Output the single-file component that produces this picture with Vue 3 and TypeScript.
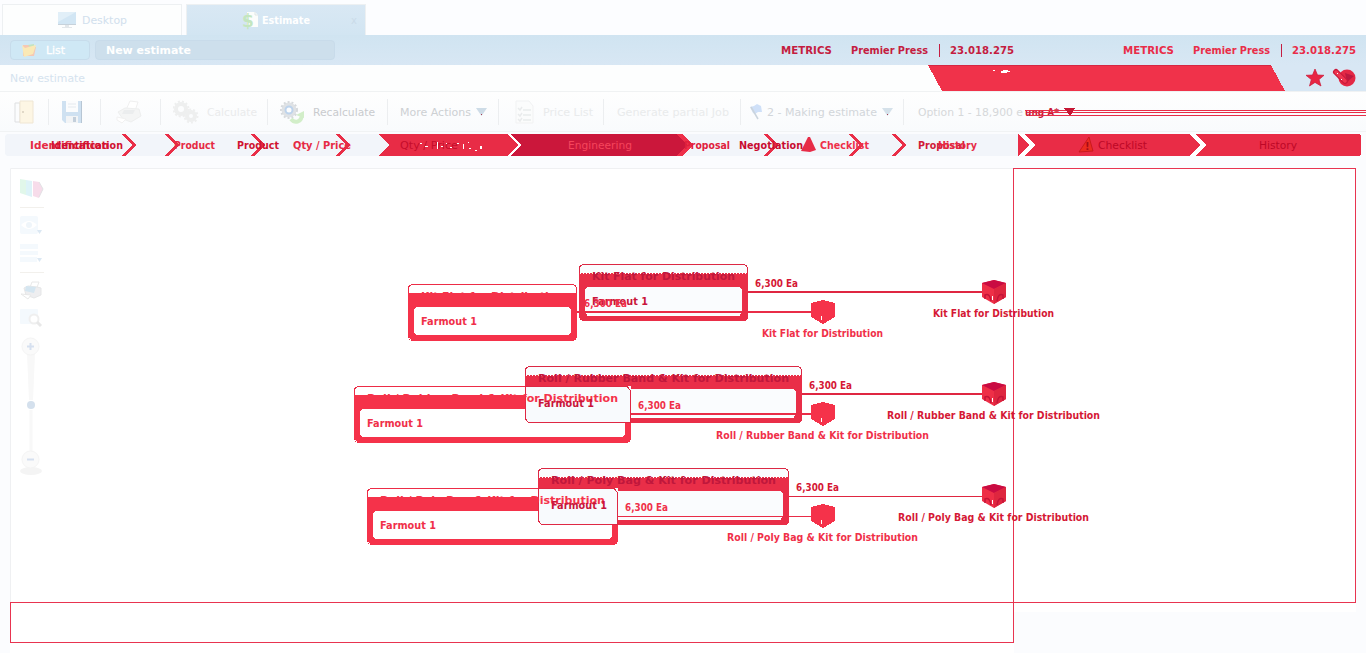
<script setup lang="ts">
import { h } from 'vue'

interface FitProps { t: string; w: number; c?: string; b?: boolean; s?: number }

// Single text line spread over a fixed width
const Fit = (p: FitProps) =>
  h('svg', { width: p.w, height: 16, style: 'display:block;overflow:visible;flex:none' }, [
    h('text', {
      x: 0, y: 12, fill: p.c ?? '#d9dcdf', 'font-size': 11,
      'font-weight': p.b ? 700 : 400, stroke: p.c, 'stroke-width': p.s ?? 0,
      textLength: p.w, lengthAdjust: 'spacingAndGlyphs',
    }, p.t),
  ])
Fit.props = { t: String, w: Number, c: String, b: Boolean, s: Number }

const brands = [{ c: '#c41c40' }, { c: '#e92c48' }]

const thin = [122, 165, 251, 336, 764, 849, 892]
const chevron = (x: number) => `M${x} 134h4l10 11l-10 11h-4l10-11z`

interface Label { t: string; x: number; w: number; c: string; thin?: boolean }
const stages: Label[] = [
  { t: 'Identification', x: 30, w: 79, c: '#e62a44' },
  { t: 'Identification', x: 51, w: 72, c: '#d01230' },
  { t: 'Product', x: 174, w: 41, c: '#e62a44' },
  { t: 'Product', x: 237, w: 42, c: '#d01230' },
  { t: 'Qty / Price', x: 293, w: 58, c: '#e62a44' },
  { t: 'Qty / Price', x: 400, w: 58, c: '#c50d2b', thin: true },
  { t: 'Engineering', x: 568, w: 64, c: '#f5455c', thin: true },
  { t: 'Proposal', x: 684, w: 46, c: '#e0203c' },
  { t: 'Negotiation', x: 739, w: 64, c: '#c80c30' },
  { t: 'Checklist', x: 820, w: 49, c: '#ee304a' },
  { t: 'Proposal', x: 918, w: 47, c: '#d01a38' },
  { t: 'History', x: 938, w: 39, c: '#e62a44' },
  { t: 'Checklist', x: 1098, w: 49, c: '#bd0826', thin: true },
  { t: 'History', x: 1259, w: 38, c: '#bd0826', thin: true },
]

interface Row {
  t: string; y: number; w: number; dark: number; light: number; titleW: number
  labelW: number; lx: number; dx: number; th: number
}
const rows: Row[] = [
  { t: 'Kit Flat for Distribution', y: 264, w: 169, dark: 579, light: 408, titleW: 143, labelW: 121, lx: 762, dx: 933, th: 2 },
  { t: 'Roll / Rubber Band & Kit for Distribution', y: 366, w: 277, dark: 525, light: 354, titleW: 251, labelW: 213, lx: 716, dx: 887, th: 2 },
  { t: 'Roll / Poly Bag & Kit for Distribution', y: 468, w: 251, dark: 538, light: 367, titleW: 225, labelW: 191, lx: 727, dx: 898, th: 1 },
]
</script>

<template>
  <div class="app">
    <nav class="tabs">
      <div class="tab">
        <svg width="20" height="18"><path d="M1 1h18v13H1z" fill="#d2e6f4" /><path d="M1 1h18L1 11z" fill="#e1eff8" /><path d="M1 13h18v1H1z" fill="#c7d2db" /><path d="M8 14h4v2h3v1H5v-1h3z" fill="#e3e7ea" /></svg>
        <Fit t="Desktop" :w="45" c="#d1e0ed" />
      </div>
      <div class="tab active">
        <svg width="17" height="19"><path d="M5 1h8l3 3v12H5z" fill="#fcfdfb" /><path d="M13 1v3h3" fill="none" stroke="#dfe6e6" /><text x="0" y="16" font-size="17" font-weight="700" fill="#c3e6bf">$</text></svg>
        <Fit t="Estimate" :w="48" c="#ffffff" b />
        <span class="close">x</span>
      </div>
    </nav>

    <header class="bar">
      <button class="list">
        <svg width="16" height="15"><path d="M2 2h6l1 2h6l-2 9H2z" fill="#f5c8b4" /><path d="M7 2l6-1v8z" fill="#c3e4c0" /><path d="M1 2l3 3 11-3-3 9-9 3z" fill="#fae9b6" /></svg>
        <Fit t="List" :w="19" c="#ffffff" :s="0.3" />
      </button>
      <div class="field"><Fit t="New estimate" :w="85" c="#ffffff" b /></div>
      <div class="brands">
        <div v-for="b in brands" :key="b.c" class="brand">
          <Fit t="METRICS" :w="51" :c="b.c" b />
          <Fit t="Premier Press" :w="77" :c="b.c" b class="press" />
          <i class="rule"></i>
          <Fit t="23.018.275" :w="64" :c="b.c" b />
        </div>
      </div>
    </header>

    <div class="crumb">
      <Fit t="New estimate" :w="75" c="#d5e3ef" />
      <svg class="banner" width="438" height="27">
        <path d="M342 0h96v26h-96z" fill="#d8e7f4" />
        <g shape-rendering="crispEdges">
          <path d="M0 0h343l14 26H14z" fill="#f0324a" />
          <path d="M0 0h343v1H1z" fill="#d52742" />
          <path d="M65 5h2v1h-2zM73 6h2v-1h5v1h2v1h-3v1h-6z" fill="#fff" />
        </g>
        <path d="M387 4l2.5 6 6.5.3-5 4.3 2 6.4-6-3.6-5.500 3.600 1.800-6.400-5.300-4.300 6.500-.3z" fill="#e82643" stroke="#ca1a3a" stroke-width=".7" />
        <circle cx="419" cy="13" r="8.500" fill="#e32845" /><path d="M417 8l9 3-7 6z" fill="#bc193f" />
        <path d="M408 7l9 9" stroke="#ca1a3b" stroke-width="6" stroke-linecap="round" /><path d="M408 7l9 9" stroke="#ee3650" stroke-width="3.500" stroke-linecap="round" />
        <path d="M409 8h1v1h-1zM413 14h1v1h-1z" fill="#fff" />
      </svg>
    </div>

    <div class="tools">
      <div class="cell c1"><svg width="20" height="24"><path d="M1 3h5v19H1z" fill="#fbfcfd" stroke="#dedfe1" /><path d="M6 1h13v22H6z" fill="#fdf6e4" stroke="#efe6d4" /><path d="M8 12h2" stroke="#c5bbaa" /></svg></div>
      <div class="cell c2"><svg width="22" height="24"><path d="M1 1h20v22H4l-3-3z" fill="#cfe1f1" /><path d="M5 1h12v11H5z" fill="#fbfcfd" /><path d="M7 4h8M7 7h8" stroke="#e4e9ee" /><path d="M5 16h12v7H5z" fill="#f2f4f6" /><path d="M12 17h3v5h-3z" fill="#c3cfdb" /><path d="M20.500 1v22" stroke="#b7c6d4" /></svg></div>
      <div class="cell c3"><svg width="26" height="24"><path d="M10 10l4-9 8 1-3 9z" fill="#fff" stroke="#f0f0f0" /><path d="M2 12l7-4 14 1 2 7-10 6-8-3z" fill="#f4f5f5" stroke="#eeefef" /><path d="M1 17l9 2-4 4-5-3z" fill="#fff" stroke="#f1f1f1" /><path d="M8 10h11l-2 4H6z" fill="#ebedee" /></svg></div>
      <div class="cell c4">
        <svg width="26" height="24"><g fill="none" stroke="#eeefef"><circle cx="8" cy="9" r="5" stroke-width="4" /><circle cx="8" cy="9" r="7.500" stroke-width="2" stroke-dasharray="2 2" /><circle cx="18" cy="16" r="4" stroke-width="4" /><circle cx="18" cy="16" r="6.500" stroke-width="2" stroke-dasharray="2 2" /></g></svg>
        <Fit t="Calculate" :w="50" c="#eaebec" />
      </div>
      <div class="cell c5">
        <svg width="26" height="24"><g fill="none"><circle cx="9" cy="10" r="5.500" stroke="#dfe2e5" stroke-width="4" /><circle cx="9" cy="10" r="8" stroke="#d6d9dc" stroke-width="2" stroke-dasharray="2 2" /><circle cx="9" cy="10" r="3.500" stroke="#bdd3ec" stroke-width="2" /><path d="M11 19c4 5 11 3 11-5" stroke="#d2eec9" stroke-width="4" /></g><path d="M16 15l8-4v7z" fill="#d2eec9" /></svg>
        <Fit t="Recalculate" :w="62" c="#c9cbce" />
      </div>
      <div class="cell c6"><Fit t="More Actions" :w="71" c="#cdd0d3" /><svg width="11" height="9"><path d="M0 1h11L5.500 9z" fill="#cedce7" /><path d="M5 7h1v1H5z" fill="#a83b4f" /></svg></div>
      <div class="cell c7">
        <svg width="20" height="24"><path d="M1 1h13l4 5v17H1z" fill="#fbfcfc" stroke="#f1f2f3" /><path d="M3 8l2 2 2-3M3 14l2 2 2-3M3 19l2 2 2-3M8 10h8M8 15h8M8 20h8" fill="none" stroke="#e9ebec" stroke-width="1.500" /></svg>
        <Fit t="Price List" :w="50" c="#e9ebec" />
      </div>
      <div class="cell c8"><Fit t="Generate partial Job" :w="112" c="#e9ebec" /></div>
      <div class="cell c9"><svg width="12" height="16"><path d="M0 3l4-1 3-2 4 2 1 6-4 0-3 2-2-1z" fill="#cfe0f8" /><path d="M1 3l7 12" stroke="#cbd4dd" stroke-width="1.500" /></svg><Fit t="2 - Making estimate" :w="110" c="#d2d6da" /><svg width="11" height="9"><path d="M0 1h11L5.500 9z" fill="#d5e1ea" /><path d="M5 7h1v1H5z" fill="#a83b4f" /></svg></div>
      <div class="cell c10"><Fit t="Option 1 - 18,900 e" :w="105" c="#d6d8da" /></div>
      <svg class="strikes" width="341" height="20" shape-rendering="crispEdges">
        <text x="0" y="14" font-size="11" font-weight="700" fill="#c91a38" textLength="34" lengthAdjust="spacingAndGlyphs">ung A*</text>
        <path d="M0 8h341v1H0zM2 10h339v1H2zM5 13h336v1H5z" fill="#e72d48" />
        <path d="M39 6h11l-5 8z" fill="#c71735" />
      </svg>
    </div>

    <svg class="ribbon" width="1366" height="26" viewBox="0 132 1366 26">
      <path d="M7 134H1018v22H7l-2-2v-18z" fill="#f2f5fa" />
      <g shape-rendering="crispEdges">
        <path d="M379 134h128l11 11-11 11H379l10-11z" fill="#e82c46" />
        <path d="M507 134h4l10 11-10 11h-4l11-11z" fill="#fff" />
        <path d="M676 134h6l11 11-11 11h-6z" fill="#ee304a" />
        <path d="M511 134h166l10 11-10 11H511l10-11z" fill="#cb173b" />
        <path v-for="x in thin" :key="x" :d="chevron(x)" fill="#e92e47" />
        <path d="M1018 134h1l10 11-10 11h-1z" fill="#e92c46" />
        <path d="M1019 134h6l10 11-10 11h-6l10-11z" fill="#fff" />
        <path d="M1025 134h165l10 11-10 11h-165l10-11z" fill="#e92c46" />
        <path d="M1190 134h6l10 11-10 11h-6l10-11z" fill="#fff" />
        <path d="M1196 134h163l2 2v18l-2 2h-163l10-11z" fill="#e92c46" />
      </g>
      <path d="M801 151l7-14h2l6 13-6 2z" fill="#e72c47" />
      <path d="M1079 152l10-15 4 14z" fill="#ec2b21" stroke="#c9191e" />
      <text x="1085" y="150" font-size="10" font-weight="700" fill="#a30b18">!</text>
      <text v-for="(s, i) in stages" :key="i" :x="s.x" y="149" font-size="11" :fill="s.c" :font-weight="s.thin ? 400 : 700" :textLength="s.w" lengthAdjust="spacingAndGlyphs">{{ s.t }}</text>
      <path d="M420 143h2v1h-2zM425 146h3v1h-3zM437 142h1v7h-1zM441 146h2v1h-2zM446 143h1v1h-1zM450 147h2v1h-2zM457 143h2v1h-2zM463 144h1v5h-1zM468 142h1v1h-1zM469 148h2v1h-2zM475 150h2v1h-2zM480 146h2v3h-2z" fill="#fff" />
    </svg>

    <svg class="canvas" width="1366" height="495" viewBox="0 158 1366 495">
      <path d="M10 168H1356V612H1014V653H10z" fill="#fff" />
      <path d="M10.500 602V168.500H1013" fill="none" stroke="#eff0f2" />

      <g opacity=".85">
        <path d="M20 179l6 1v15l-6-2z" fill="#dcf6e7" /><path d="M26 180l6 1v16l-6-2z" fill="#d8f1f7" /><path d="M33 181l6 1 4 7-4 9-6-2z" fill="#f6d7e7" /><path d="M39 182l4 7-4 8" fill="none" stroke="#dddde0" />
        <path d="M20 207.500h24M20 272.500h24" stroke="#f0eee9" />
        <rect x="20" y="216" width="18" height="18" rx="2" fill="#f3f8fd" /><path d="M21 225q8-8 16 0q-8 8-16 0z" fill="#fff" /><circle cx="29" cy="225" r="3" fill="#edf4fa" />
        <path d="M37 230h5l-2.500 4zM37 258h5l-2.500 4z" fill="#d6e5f2" />
        <path d="M20 244h18v5H20zM20 251h18v4H20zM20 257h17v5H20z" fill="#f3f8fd" />
        <path d="M29 290l3-8 7 0-3 8z" fill="#fff" stroke="#e6e6e6" /><path d="M24 288l4-2 9 1 4 1v7l-7 3-8-3z" fill="#ececee" stroke="#e2e3e4" /><path d="M26 286l10 1-2 6-9-2z" fill="#cee2ef" /><path d="M21 294l10 1-3 4z" fill="#fff" stroke="#e5e5e5" />
        <rect x="20" y="309" width="18" height="15" rx="1" fill="#f3f8fd" /><circle cx="34" cy="319" r="4.500" fill="#fff" stroke="#ededed" stroke-width="2" /><path d="M37 322l4 4" stroke="#e5e5e5" stroke-width="3" />
        <path d="M27 352h8l-2 48h-4zM29.500 410h3v42h-3z" fill="#f7f7f7" />
        <ellipse cx="31" cy="471" rx="11" ry="4" fill="#f3f3f3" />
        <circle cx="30.500" cy="346.500" r="8.500" fill="#fafafa" stroke="#f3f3f3" /><circle cx="30.500" cy="459.500" r="8.500" fill="#fafafa" stroke="#f3f3f3" />
        <path d="M27 346.500h7M30.500 343v7M27 459.500h7" stroke="#cfdbed" stroke-width="2" /><circle cx="31" cy="405" r="4" fill="#cddbea" />
      </g>

      <g fill="none" stroke="#e83450" shape-rendering="crispEdges">
        <path d="M1013.500 642V168.500H1355.500V602.500H10.500V642.500H1014" />
      </g>

      <g v-for="(r, i) in rows" :key="r.t">
        <g shape-rendering="crispEdges">
          <rect :x="r.dark + .5" :y="r.y + .5" :width="r.w - 1" height="56" rx="4" fill="#fafcfe" stroke="#dc2844" />
          <path :d="`M${r.dark} ${r.y + 9}h${r.w}v45l-3 3h${6 - r.w}l-3-3z`" fill="#e92e48" />
          <path :d="`M${r.dark + 1} ${r.y + 9.5}h${r.w - 2}`" stroke="#fff" stroke-dasharray="1 2" />
          <rect :x="r.dark + 6" :y="r.y + 23" :width="r.w - 12" height="28" rx="4" fill="#fafcfe" />
          <path :d="`M${r.dark + r.w} ${r.y + 27}H983v${r.th}H${r.dark + r.w}z`" :transform="`translate(0 ${2 - r.th})`" fill="#df2641" />
          <path :d="`M${r.dark + 8} ${r.y + 51.5}h${r.w - 16}`" stroke="#fff" />
        </g>
        <text :x="r.dark + 13" :y="r.y + 16" font-size="11" font-weight="700" fill="#c0173c" :textLength="r.titleW" lengthAdjust="spacingAndGlyphs">{{ r.t }}</text>
        <g shape-rendering="crispEdges">
          <rect :x="r.light + .5" :y="r.y + 20.5" :width="r.w - 1" height="56" rx="4" fill="#fff" stroke="#ed2c46" />
          <path :d="`M${r.light} ${r.y + 29}h${r.w}v44l-4 4h${8 - r.w}l-4-4z`" fill="#f5324a" />
          <rect :x="r.light + 6" :y="r.y + 43" :width="r.w - 12" height="28" rx="4" fill="#fff" />
        </g>
        <g v-if="i > 0" shape-rendering="crispEdges">
          <path :d="`M${r.dark} ${r.y + 20}H${r.light + r.w}V${r.y + 57}H${r.dark + 3}l-3-3z`" fill="#f8fafd" />
          <path :d="`M${r.dark + .5} ${r.y + 20}V${r.y + 53}l3 3.500H${r.light + r.w}M${r.dark} ${r.y + 20.5}H${r.light + r.w - 4}l3.500 4V${r.y + 57}`" fill="none" stroke="#df2844" />
        </g>
        <text :x="r.light + 13" :y="r.y + 36" font-size="11" font-weight="700" fill="#f5324a" :textLength="r.titleW" lengthAdjust="spacingAndGlyphs">{{ r.t }}</text>
        <path :d="`M${r.light + r.w} ${r.y + 47}H812v${r.th}H${r.light + r.w}z`" :transform="`translate(0 ${2 - r.th})`" fill="#e92c47" shape-rendering="crispEdges" />

        <g font-size="11" font-weight="700">
          <text :x="r.dark + 13" :y="r.y + 41" fill="#c9153a" textLength="56" lengthAdjust="spacingAndGlyphs">Farmout 1</text>
          <g fill="#f03049">
            <text :x="r.light + 13" :y="r.y + 61" textLength="56" lengthAdjust="spacingAndGlyphs">Farmout 1</text>
            <text :x="r.light + r.w + 7" :y="r.y + 43" font-size="10" textLength="43" lengthAdjust="spacingAndGlyphs">6,300 Ea</text>
            <text :x="r.lx" :y="r.y + 73" :textLength="r.labelW" lengthAdjust="spacingAndGlyphs">{{ r.t }}</text>
          </g>
          <g fill="#d51835">
            <text :x="r.dark + r.w + 7" :y="r.y + 23" font-size="10" textLength="43" lengthAdjust="spacingAndGlyphs">6,300 Ea</text>
            <text :x="r.dx" :y="r.y + 53" :textLength="r.labelW" lengthAdjust="spacingAndGlyphs">{{ r.t }}</text>
          </g>
        </g>

        <g :transform="`translate(811 ${r.y + 36})`">
          <path d="M0 3L12 0l12 3v14l-12 7L0 17z" fill="#f5324a" shape-rendering="crispEdges" /><path d="M10.500 16v4" stroke="#fff" />
        </g>
        <g :transform="`translate(982 ${r.y + 16})`">
          <path d="M0 3L12 0l12 3v14l-12 7L0 17z" fill="#ee2f47" /><path d="M0 3L12 0l12 3-12 6z" fill="#c90b42" /><path d="M12 9l12-6v14l-12 7z" fill="#de263f" />
          <path d="M3 19v-4q5-2 6 6M21 19v-4q-5-2-6 6" fill="none" stroke="#c51338" stroke-width="1.500" /><path d="M10.500 16v4" stroke="#fff" />
        </g>
      </g>
    </svg>
  </div>
</template>

<style>
body { margin: 0; background: #fdfefe; overflow: hidden; }
</style>

<style scoped>
.app { width: 1366px; height: 653px; overflow: hidden; background: #fbfcfe; font-family: Verdana, "DejaVu Sans", sans-serif; font-size: 11px; }
svg { display: block; flex: none; }
.tabs { display: flex; height: 35px; box-sizing: border-box; padding: 4px 0 0 2px; gap: 4px; background: #fcfdff; }
.tab { display: flex; width: 180px; box-sizing: border-box; border: 1px solid #edf0f2; border-bottom: 0; padding-left: 54px; gap: 5px; align-items: center; background: #fdfefe; }
.tab.active { padding-left: 55px; gap: 3px; background: linear-gradient(#d9e8f4, #d2e5f2); }
.close { margin-left: 38px; color: #cadbe8; font-size: 10px; }
.bar { display: flex; height: 30px; align-items: center; background: linear-gradient(#d0e4f1, #d8e7f4); padding-left: 10px; gap: 5px; }
.list { display: flex; width: 80px; height: 20px; padding: 0 0 0 10px; gap: 9px; align-items: center; border: 1px solid #c7dceb; border-radius: 4px; background: #cfe8f5; font: inherit; }
.field { display: flex; width: 240px; height: 20px; box-sizing: border-box; padding-left: 10px; align-items: center; border: 1px solid #c8dbea; border-radius: 4px; background: #cddfec; }
.brands { display: flex; margin-left: 441px; gap: 109px; }
.brand { display: flex; align-items: center; }
.press { margin-left: 19px; }
.rule { width: 1px; height: 13px; margin: 0 10px 0 11px; background: #c51d42; }
.crumb { display: flex; height: 26px; align-items: center; padding-left: 10px; justify-content: space-between; background: #fdfefe; border-bottom: 1px solid #f0f2f3; box-sizing: content-box; }
.banner { align-self: flex-start; }
.tools { display: flex; height: 39px; align-items: center; background: linear-gradient(#fefefe, #f9fbfd); border-bottom: 1px solid #f1f3f4; }
.cell { display: flex; height: 26px; align-items: center; box-sizing: border-box; border-right: 1px solid #eceef0; }
.c1 { width: 49px; padding-left: 14px; }
.c2 { width: 52px; padding-left: 12px; }
.c3 { width: 60px; padding-left: 15px; }
.c4 { width: 107px; padding-left: 12px; gap: 8px; }
.c5 { width: 120px; padding-left: 12px; gap: 7px; }
.c6 { width: 111px; padding-left: 12px; gap: 5px; }
.c7 { width: 105px; padding-left: 16px; gap: 8px; }
.c8 { width: 137px; padding-left: 13px; }
.c9 { width: 163px; padding-left: 9px; gap: 5px; }
.c10 { width: 121px; padding-left: 14px; border: 0; }
.ribbon { background: #fbfcfe; }
.strikes { overflow: visible; }
text { white-space: pre; }
</style>
